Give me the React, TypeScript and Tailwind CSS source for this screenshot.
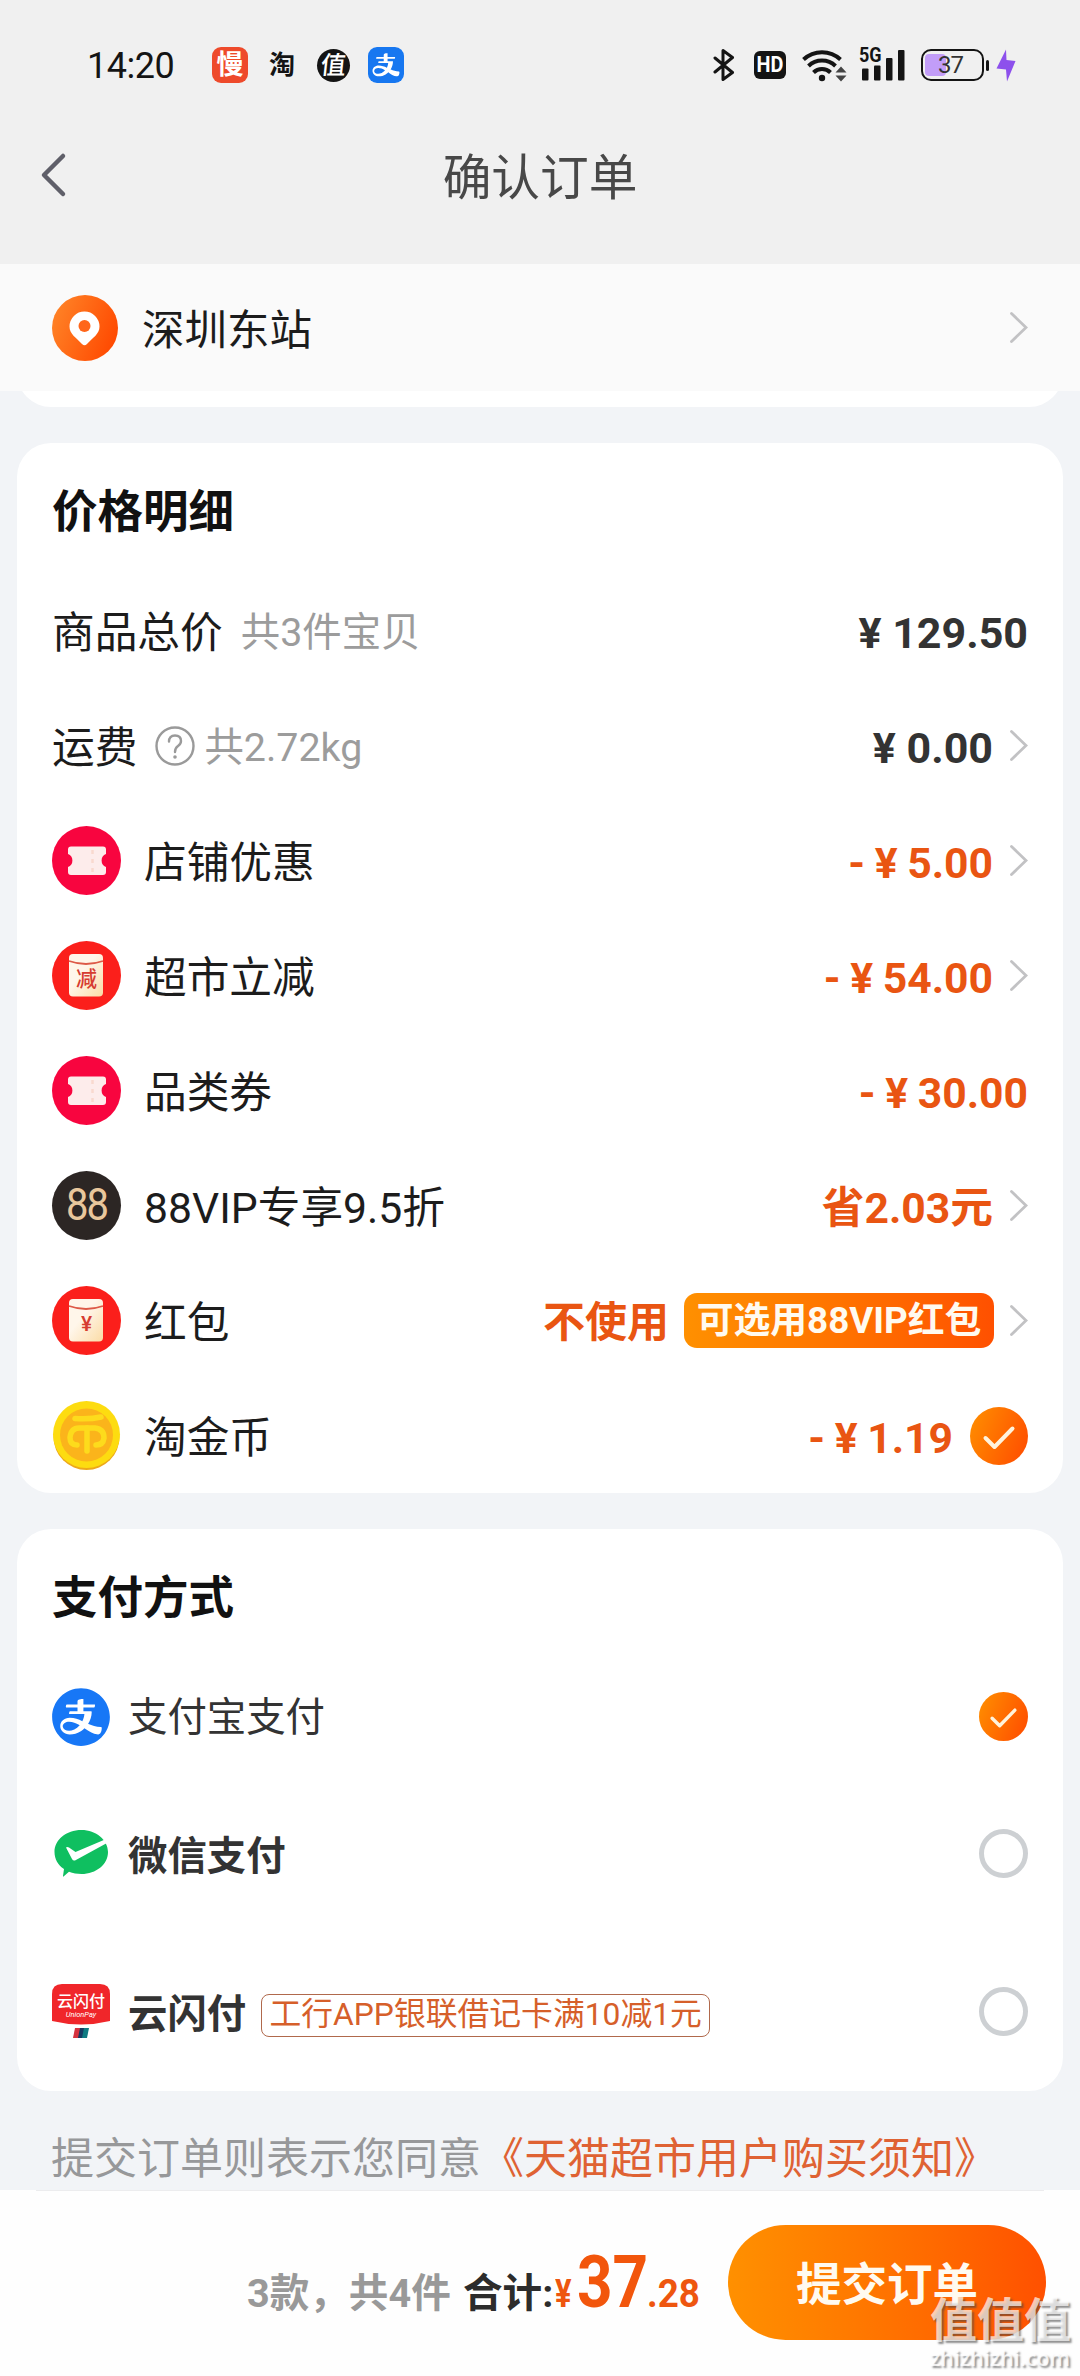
import type { ReactNode } from "react";
import { AiFillAlipayCircle, AiFillAlipaySquare } from "react-icons/ai";

const FONT = "font-[Roboto,'Noto_Sans_CJK_SC',sans-serif]";

function StatusBar() {
  return (
    <div className="flex h-[130px] items-center text-[#141414]">
      <span className="ml-[87px] w-[125px] pt-0.5 text-[36px] leading-[40px] tracking-[-0.500px]">14:20</span>
      <span className="flex size-9 items-center justify-center rounded-[9px] bg-[#ee4a2b] text-[27px] leading-none font-bold text-white">
        慢
      </span>
      <span className="ml-5 flex w-[28px] items-center justify-center text-[26px] leading-none font-bold">淘</span>
      <span className="ml-[21px] flex size-[33px] items-center justify-center rounded-full bg-[#141414] text-[25px] leading-none font-medium text-white">
        <span className="-skew-x-6">值</span>
      </span>
      <span className="ml-[18px] flex size-9 items-center justify-center overflow-hidden rounded-[9px] bg-white">
        <AiFillAlipaySquare className="size-[48px] shrink-0 text-[#1777f0]" />
      </span>

      <svg className="ml-[309px]" width="22" height="34" viewBox="0 0 22 34" fill="none" stroke="#141414" strokeWidth="3" strokeLinejoin="round" strokeLinecap="round">
        <path d="M2 10 L19.5 24.5 L10 31.5 V2.5 L19.5 9.5 L2 24" />
      </svg>
      <span className="ml-[19px] flex h-[28px] w-[32px] items-center justify-center rounded-[6px] bg-[#141414] text-white">
        <span className="scale-x-90 text-[22px] leading-none font-bold">HD</span>
      </span>
      <svg className="ml-[15px]" width="47" height="34" viewBox="0 0 47 34" fill="none" stroke="#141414" strokeWidth="4">
        <path d="M2.5 11.5 A27 27 0 0 1 39.5 11.5" />
        <path d="M7.5 18 A19.5 19.5 0 0 1 34.5 18" />
        <path d="M12.500 24.500 A12 12 0 0 1 29.500 24.500" />
        <circle cx="21" cy="30" r="3.200" fill="#141414" stroke="none" />
        <path d="M34.500 24.500 L40 18.500 L45.500 24.500Z M34.500 27.500 L40 33.500 L45.500 27.500Z" fill="#444" stroke="none" />
      </svg>
      <span className="relative ml-[12px] h-[34px] w-[46px]">
        <svg width="46" height="34" viewBox="0 0 46 34" fill="#141414">
          <rect x="2" y="20.500" width="6.500" height="12" rx="1" />
          <rect x="14" y="17.500" width="6.500" height="15" rx="1" />
          <rect x="26" y="10" width="6.500" height="22.500" rx="1" />
          <rect x="38" y="2" width="6.500" height="30.500" rx="1" />
        </svg>
        <span className="absolute -top-px -left-px origin-left scale-x-[.9] text-[20px] leading-[17px] font-bold">5G</span>
      </span>
      <span className="ml-[15px] flex h-[32px] w-[63px] items-center rounded-[10px] border-[2.500px] border-[#141414] pl-[2px]">
        <span className="relative h-[22px] w-[21px] rounded-[4px] bg-[#c29df8]">
          <span className="absolute top-0 left-[13px] text-[24px] leading-[22px] tracking-[-1px] text-[#333]">37</span>
        </span>
      </span>
      <span className="ml-[2px] h-[11px] w-[3px] rounded-full bg-[#141414]" />
      <svg className="ml-[7px]" width="20" height="33" viewBox="0 0 20 33" fill="#8d50ec">
        <path d="M10 0.500 L10.500 11 L19.500 12 L11 32.500 L10 20.500 L0.500 19.500Z" />
      </svg>
    </div>
  );
}

function Chevron({ className = "" }: { className?: string }) {
  return (
    <svg className={"shrink-0 " + className} width="18" height="31" viewBox="0 0 18 31" fill="none" stroke="#c2c2c4" strokeWidth="2.800">
      <path d="M1.500 1.500 L16 15.500 L1.500 29.500" strokeLinecap="round" />
    </svg>
  );
}

function Ticket() {
  return (
    <svg width="69" height="69" viewBox="0 0 69 69">
      <circle cx="34.500" cy="34.500" r="34.500" fill="#f8053f" />
      <path
        d="M19 20.500 H51 Q54 20.500 54 23.500 V28 A7 7 0 0 0 54 41 V46 Q54 49 51 49 H19 Q16 49 16 46 V41 A7 7 0 0 0 16 28 V23.500 Q16 20.500 19 20.500Z"
        fill="#fdeceb"
      />
      <path d="M40.500 24 V49" stroke="#f9d9cf" strokeWidth="2.500" strokeDasharray="4 5" />
    </svg>
  );
}

function Packet({ label }: { label: string }) {
  return (
    <span className="relative block size-[69px]">
      <svg width="69" height="69" viewBox="0 0 69 69">
        <defs>
          <linearGradient id="packet" x1="0" y1="0" x2="1" y2="1">
            <stop offset="0.400" stopColor="#fff6ea" />
            <stop offset="1" stopColor="#fbdca6" />
          </linearGradient>
        </defs>
        <circle cx="34.500" cy="34.500" r="34.500" fill="#fb1f1b" />
        <rect x="17" y="13" width="34" height="42.500" rx="4" fill="url(#packet)" />
        <path d="M17 20 Q34 26 51 20" fill="none" stroke="#dd5a48" strokeWidth="1.800" />
      </svg>
      <span className="absolute inset-x-0 top-[26px] text-center text-[21px] leading-[24px] font-medium text-[#d63c30]">{label}</span>
    </span>
  );
}

function Vip() {
  return (
    <span className="flex size-[69px] items-center justify-center rounded-full bg-[#2c2624] text-[#e9c79c]">
      <span className="scale-y-[1.100] text-[40px] leading-none tracking-[-2px]">88</span>
    </span>
  );
}

function Coin() {
  return (
    <svg width="69" height="69" viewBox="0 0 69 69" fill="none">
      <circle cx="34.500" cy="36" r="33" fill="#eda81a" />
      <circle cx="34.500" cy="33.500" r="33.500" fill="#fddc10" />
      <circle cx="34.500" cy="34" r="26.500" fill="#fbb41b" />
      <g stroke="#fddb1c" strokeWidth="5.500" strokeLinecap="round">
        <path d="M23 17.500 Q38 18.500 49 16" />
        <path d="M35 27 V50" />
        <path d="M25 44 Q18 44 18 36.500 Q19 27 27 27 H43 Q52 28 52 37 Q51 44 44 44" />
      </g>
    </svg>
  );
}

function Check({ size }: { size: number }) {
  return (
    <svg className="shrink-0" width={size} height={size} viewBox="0 0 58 58" fill="none">
      <defs>
        <linearGradient id="check" x1="0" y1="0.300" x2="1" y2="0.700">
          <stop offset="0" stopColor="#ff8a00" />
          <stop offset="1" stopColor="#ff5000" />
        </linearGradient>
      </defs>
      <circle cx="29" cy="29" r="29" fill="url(#check)" />
      <path d="M15.500 31 L24.500 40 L42.500 21.500" stroke="#fff3dc" strokeWidth="4" strokeLinecap="round" strokeLinejoin="round" />
    </svg>
  );
}

function PriceRow({ icon, label, children, red = true }: { icon?: ReactNode; label: ReactNode; children: ReactNode; red?: boolean }) {
  return (
    <div className="flex h-[115px] items-center">
      {icon && <span className="mr-[23px] shrink-0">{icon}</span>}
      <span className="flex items-center text-[42.700px] leading-[60px] text-[#1c1c1c]">{label}</span>
      <span
        className={
          "ml-auto flex items-center leading-[60px] font-bold " +
          (red ? "text-[42.700px] text-[#e95512] [word-spacing:-1px]" : "text-[43px] text-[#333]")
        }
      >
        {children}
      </span>
    </div>
  );
}

function T({ children, className = "" }: { children: ReactNode; className?: string }) {
  return <span className={"whitespace-pre pt-1 " + className}>{children}</span>;
}

function PriceCard() {
  return (
    <section className="mx-[17px] mt-9 rounded-[34px] bg-white px-[35px]">
      <h2 className="h-[130px] pt-[40px] text-[45.500px] leading-[60px] font-bold text-[#111]">价格明细</h2>
      <PriceRow
        red={false}
        label={
          <>
            <T>商品总价</T>
            <T className="ml-[18px] text-[39.400px] text-[#9c9c9c]">共3件宝贝</T>
          </>
        }
      >
        <T>¥ 129.50</T>
      </PriceRow>
      <PriceRow
        red={false}
        label={
          <>
            <T>运费</T>
            <svg className="ml-[18px]" width="40" height="40" viewBox="0 0 40 40" fill="none" stroke="#9a9a9a" strokeWidth="2.400">
              <circle cx="20" cy="20" r="18.500" />
              <path d="M14 15.500 Q14 9.500 20 9.500 Q26 9.500 26 15 Q26 18 23 20 Q20 22 20 26" strokeLinecap="round" />
              <circle cx="20" cy="31" r="1.800" fill="#9a9a9a" stroke="none" />
            </svg>
            <T className="ml-[9px] text-[39.400px] text-[#9c9c9c]">共2.72kg</T>
          </>
        }
      >
        <T>¥ 0.00</T>
        <Chevron className="ml-[17px]" />
      </PriceRow>
      <PriceRow icon={<Ticket />} label={<T>店铺优惠</T>}>
        <T>- ¥ 5.00</T>
        <Chevron className="ml-[17px]" />
      </PriceRow>
      <PriceRow icon={<Packet label="减" />} label={<T>超市立减</T>}>
        <T>- ¥ 54.00</T>
        <Chevron className="ml-[17px]" />
      </PriceRow>
      <PriceRow icon={<Ticket />} label={<T>品类券</T>}>
        <T>- ¥ 30.00</T>
      </PriceRow>
      <PriceRow icon={<Vip />} label={<T>88VIP专享9.5折</T>}>
        <T>省2.03元</T>
        <Chevron className="ml-[17px]" />
      </PriceRow>
      <PriceRow icon={<Packet label="¥" />} label={<T>红包</T>}>
        <T className="text-[42px]">不使用</T>
        <span className="ml-[15px] flex h-[55px] w-[310px] items-center justify-center rounded-[13px] bg-linear-to-r from-[#ff9000] to-[#ff5000] text-[36.800px] whitespace-nowrap text-[#fffaf0]">
          可选用88VIP红包
        </span>
        <Chevron className="ml-[16px]" />
      </PriceRow>
      <PriceRow icon={<Coin />} label={<T>淘金币</T>}>
        <T className="mr-[17px]">- ¥ 1.19</T>
        <Check size={58} />
      </PriceRow>
    </section>
  );
}

function AlipayLogo() {
  return (
    <span className="flex size-[58px] items-center justify-center">
      <span className="flex size-[54px] items-center justify-center rounded-full bg-white">
        <AiFillAlipayCircle className="size-[66px] shrink-0 text-[#1777f6]" />
      </span>
    </span>
  );
}

function WechatLogo() {
  return (
    <svg width="58" height="50" viewBox="0 0 58 50">
      <path d="M29.500 1 C44 1 56 11 56 23 C56 35.500 44 45 29.500 45 C25 45 21 44.500 17 42.800 L11.500 47.500 Q11 48 11 47 L12 40 C6 36 2.500 30 2.500 23 C2.500 11 14 1 29.500 1Z" fill="#0fbf60" />
      <path d="M14 18.500 Q15 17.500 17 18.500 L23.500 23 L53 10.500 L55 14 L23 31.500 Q21 32 20 30Z" fill="#fff" />
    </svg>
  );
}

function UnionPayLogo() {
  return (
    <span className="relative block h-[55px] w-[58px]">
      <svg width="58" height="55" viewBox="0 0 58 55">
        <path d="M10 0 H48 Q58 0 58 10 V37 Q29 44 0 37 V10 Q0 0 10 0Z" fill="#f0262a" />
        <path d="M23 44 H29 L27 54 H21Z" fill="#d6333f" />
        <path d="M28 44 H33 L31 54 H26Z" fill="#173a63" />
        <path d="M32 44 H37 L35 54 H30Z" fill="#0f7b82" />
      </svg>
      <span className="absolute inset-x-0 top-[9px] text-center text-[16px] leading-[18px] font-medium whitespace-nowrap text-white">云闪付</span>
      <span className="absolute inset-x-0 top-[26px] text-center text-[7.500px] leading-[9px] text-white italic">UnionPay</span>
    </span>
  );
}

function PayRow({ logo, label, checked, tag, className }: { logo: ReactNode; label: string; checked?: boolean; tag?: string; className: string }) {
  return (
    <div className={"flex items-center " + className}>
      <span className="w-[76px] shrink-0">{logo}</span>
      <span className={"text-[39.400px] leading-[50px] text-[#333] " + (checked ? "pt-[3px]" : "pt-[7px] font-bold")}>{label}</span>
      {tag && (
        <span className="mt-[8px] ml-[15px] flex h-[43px] w-[449px] items-center justify-center rounded-[8px] border border-[#b0694c] text-[31.800px] leading-none whitespace-nowrap text-[#d65f2a]">
          {tag}
        </span>
      )}
      <span className="ml-auto">
        {checked ? <Check size={49} /> : <span className="block size-[49px] rounded-full border-[5px] border-[#cdd0d3]" />}
      </span>
    </div>
  );
}

function PayCard() {
  return (
    <section className="mx-[17px] mt-9 h-[562px] rounded-[34px] bg-white px-[35px]">
      <h2 className="h-[130px] pt-[40px] text-[45.500px] leading-[60px] font-bold text-[#111]">支付方式</h2>
      <PayRow className="h-[115px]" logo={<AlipayLogo />} label="支付宝支付" checked />
      <PayRow className="h-[159px]" logo={<WechatLogo />} label="微信支付" />
      <PayRow className="h-[156px]" logo={<UnionPayLogo />} label="云闪付" tag="工行APP银联借记卡满10减1元" />
    </section>
  );
}

function SubmitBar() {
  return (
    <footer className="relative flex h-[186px] items-start bg-[#fefefe]">
      <div className="absolute inset-x-9 top-0 h-px bg-[#ececee]" />
      <div className="mt-[62px] ml-[247px] flex h-[60px] items-baseline text-[39.600px] leading-[60px] font-bold whitespace-nowrap">
        <span className="w-[216px] text-[#999]">3款，共4件</span>
        <span className="w-[92px] text-[#2c2c2c]">合计:</span>
        <span className="w-[22px] origin-left scale-x-[.78] text-[#ee560f]">¥</span>
        <span className="w-[70px] origin-left scale-x-[.85] text-[73px] text-[#f2560c]">37</span>
        <span className="w-[56px] origin-left scale-x-[.93] text-[#ee560f]">.28</span>
      </div>
      <button className="absolute top-[35px] left-[728px] flex h-[115px] w-[318px] items-center justify-center rounded-full bg-linear-to-r from-[#ff9000] to-[#ff5000] pt-[7px] text-[45.500px] font-bold text-[#fffaf0]">
        提交订单
      </button>
      <div className="absolute top-[104px] left-[930px] w-[144px] text-white/70 [text-shadow:2px_2px_2px_rgba(70,70,70,.6)]">
        <div className="text-[47px] leading-[53px] font-bold whitespace-nowrap">值值值</div>
        <div className="font-['Open_Sans',sans-serif] text-[21.500px] leading-[22px] font-semibold text-white/80">zhizhizhi.com</div>
      </div>
    </footer>
  );
}

export default function App() {
  return (
    <div className={"flex h-[2376px] w-[1080px] flex-col overflow-hidden bg-[#f2f4f7] " + FONT}>
      <header className="h-[264px] shrink-0 bg-[#f0f0f0]">
        <StatusBar />
        <div className="grid h-[90px] grid-cols-[1fr_auto_1fr] items-center">
          <svg className="ml-10" width="28" height="46" viewBox="0 0 28 46" fill="none" stroke="#5f5f69" strokeWidth="4.500" strokeLinecap="round" strokeLinejoin="round">
            <path d="M23 4 L4 23 L23 42" />
          </svg>
          <h1 className="pt-[7px] text-[48.700px] leading-[60px] text-[#484848]">确认订单</h1>
        </div>
      </header>
      <div className="flex h-[127px] shrink-0 items-center bg-[#fafafa] px-[52px]">
        <svg width="66" height="66" viewBox="0 0 66 66">
          <defs>
            <linearGradient id="pin" x1="0" y1="0.300" x2="1" y2="0.700">
              <stop offset="0" stopColor="#ff8226" />
              <stop offset="1" stopColor="#ff4800" />
            </linearGradient>
          </defs>
          <circle cx="33" cy="33" r="33" fill="url(#pin)" />
          <path d="M32.500 16.500 A15 15 0 0 1 47.500 31.500 C47.500 39 41 42.500 35 49 Q32.500 51.500 30 49 C24 42.500 17.500 39 17.500 31.500 A15 15 0 0 1 32.500 16.500Z" fill="#fff" />
          <circle cx="32.500" cy="31" r="6" fill="#ff661a" />
        </svg>
        <span className="ml-6 pt-[7px] text-[42.500px] leading-[60px] text-[#1c1c1c]">深圳东站</span>
        <Chevron className="ml-auto" />
      </div>
      <div className="mx-[17px] h-4 shrink-0 overflow-hidden">
        <div className="-mt-[60px] h-[76px] rounded-[34px] bg-white" />
      </div>
      <PriceCard />
      <PayCard />
      <p className="h-[99px] shrink-0 pt-[38px] pl-[51px] text-[43px] leading-[60px] whitespace-nowrap text-[#97989a]">
        提交订单则表示您同意<span className="text-[#df6233]">《天猫超市用户购买须知》</span>
      </p>
      <SubmitBar />
    </div>
  );
}
